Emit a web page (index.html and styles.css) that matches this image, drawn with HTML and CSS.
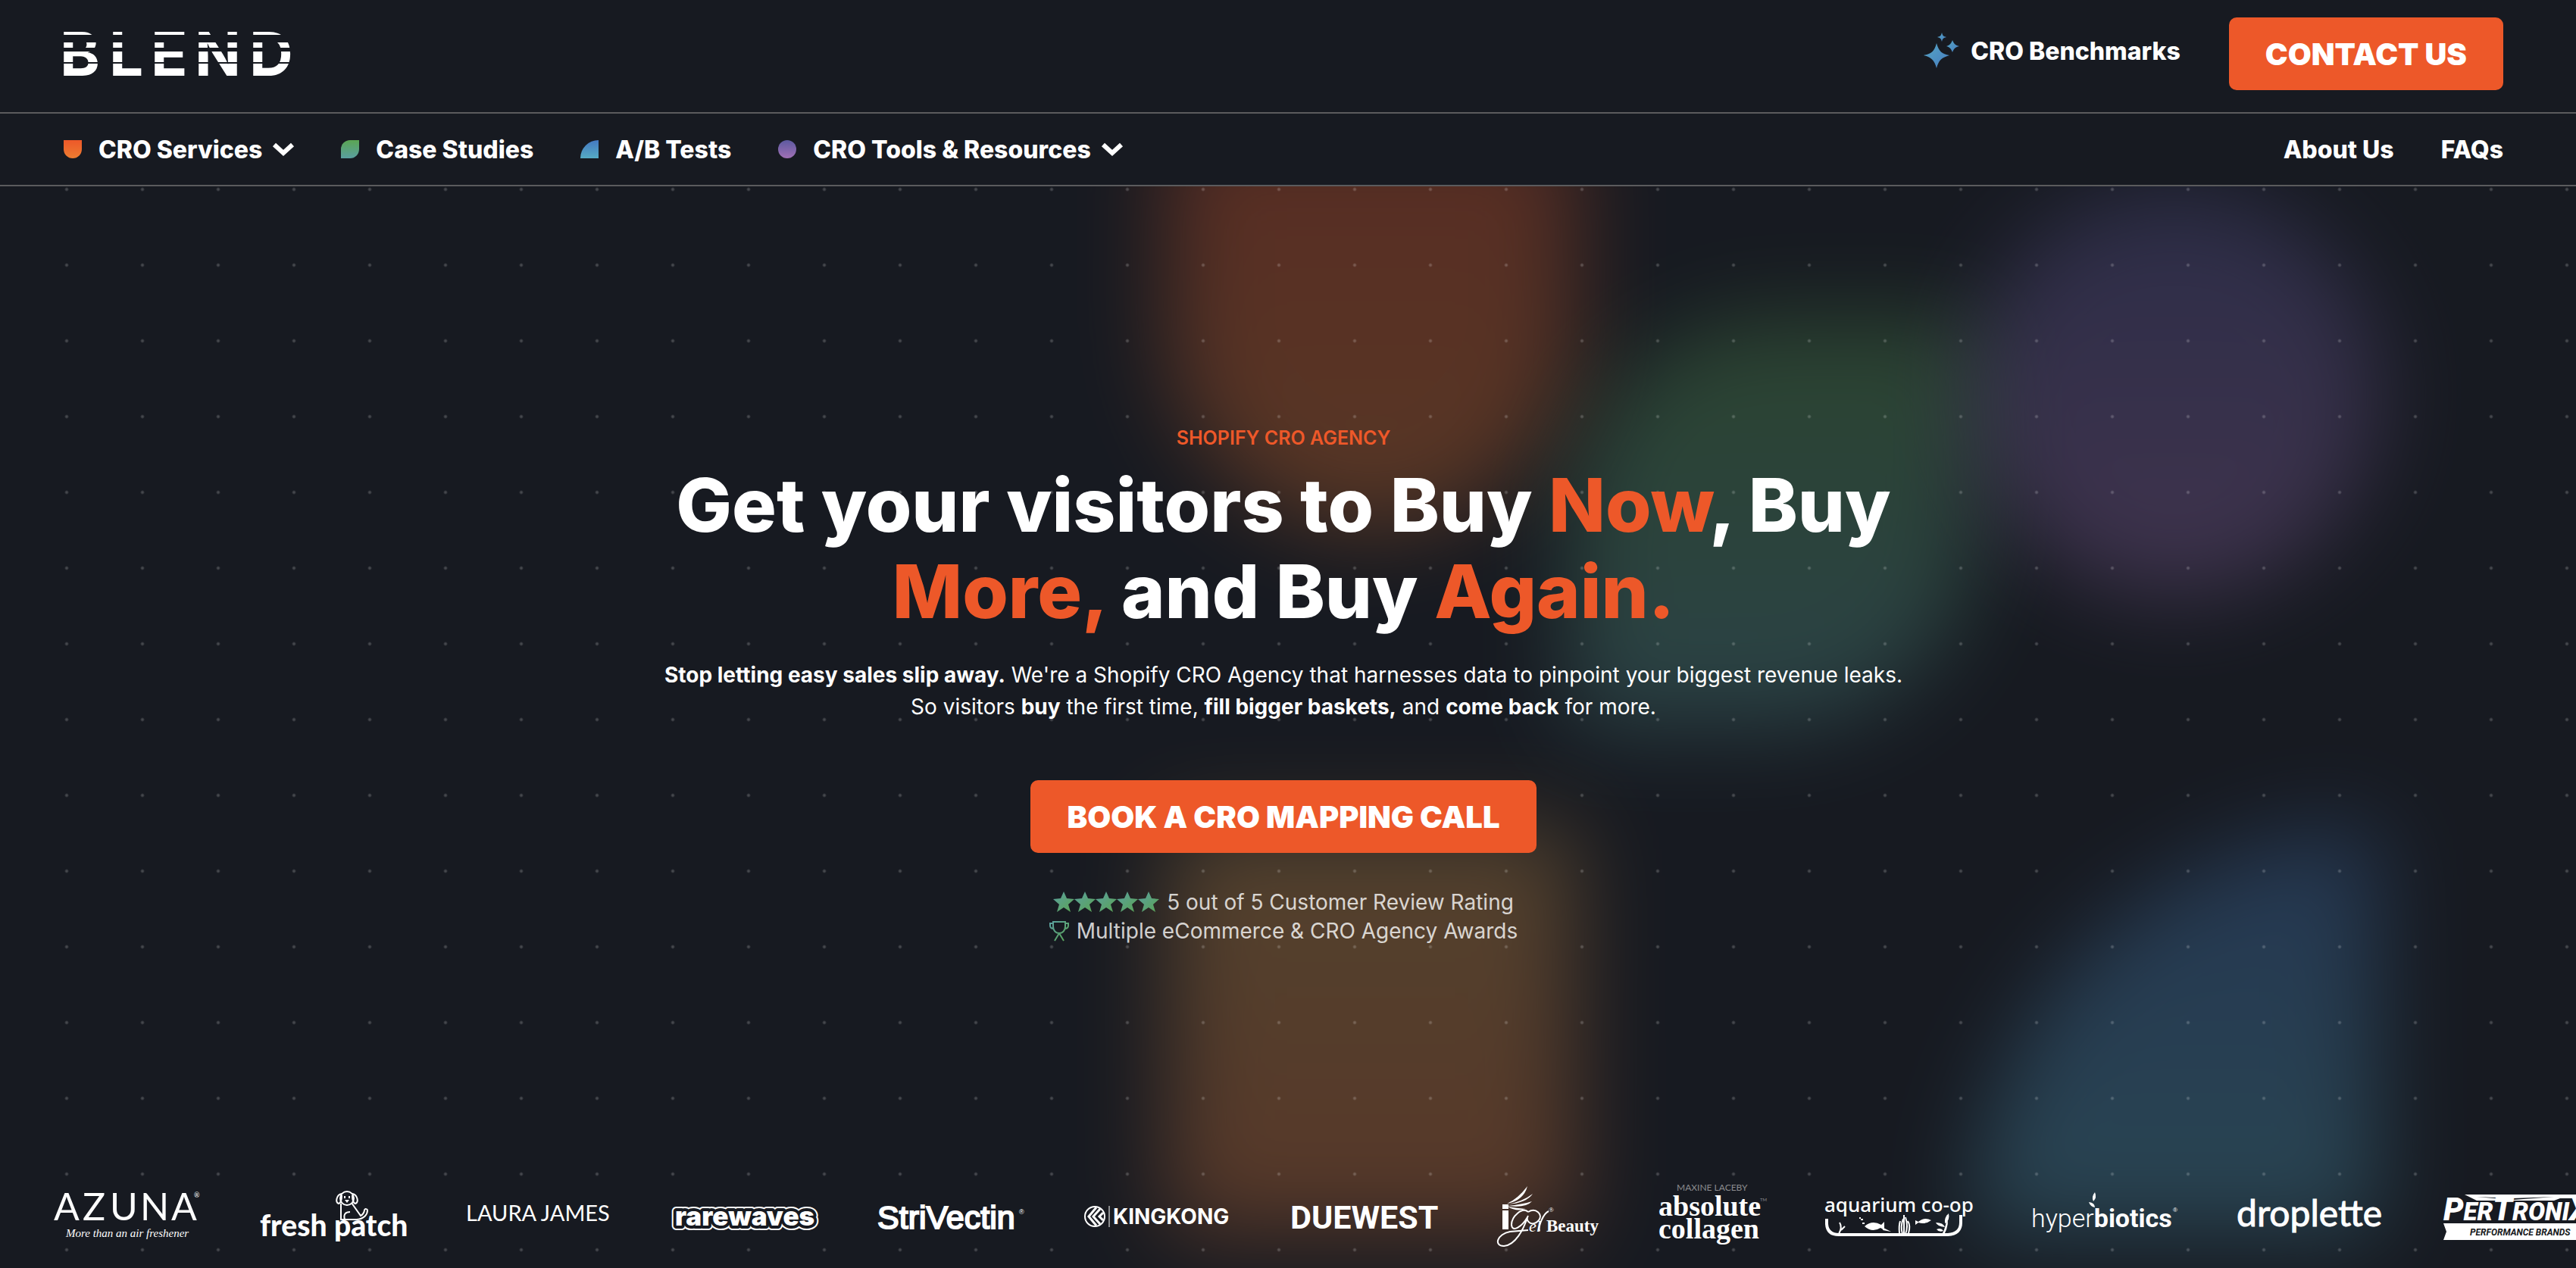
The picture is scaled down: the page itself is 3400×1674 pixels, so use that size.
FILE: index.html
```html
<!DOCTYPE html>
<html lang="en">

<head>
    <meta charset="UTF-8">
    <meta name="viewport" content="width=device-width, initial-scale=1.0">
    <title>Shopify CRO Agency | Blend</title>
    <link rel="stylesheet" href="styles.css">
</head>

<body>
    <header>
        <div class="top-bar">
            <a class="brand" href="#" aria-label="Blend">
                <svg width="304" height="58" viewBox="0 0 304 58">
                    <text class="brand-text" x="-5 60 115 173 245" y="58">BLEND</text>
                    <g class="brand-cuts">
                        <rect x="0" y="4" width="304" height="10" />
                        <rect x="0" y="21" width="304" height="5" />
                        <rect x="0" y="40" width="304" height="2" />
                    </g>
                </svg>
            </a>
            <div class="top-links">
                <a class="benchmarks" href="#">
                    <svg width="48" height="48" viewBox="0 0 48 48">
                        <defs>
                            <linearGradient id="spark" x1="0" y1="0" x2="1" y2="1">
                                <stop offset="0" stop-color="#56a6c4" />
                                <stop offset="1" stop-color="#467cc0" />
                            </linearGradient>
                        </defs>
                        <g fill="url(#spark)">
                            <path d="M17 14C20 25 24 28 34 30C24 33 20 36 17 47C14 36 10 33 0 30C10 28 14 25 17 14Z" />
                            <path d="M38 10C40 15 42 17 47 18C42 19 40 21 38 26C36 21 34 19 30 18C34 17 36 15 38 10Z" />
                            <path d="M24 0C25 4 26 5 30 6C26 7 25 8 24 12C23 8 22 7 18 6C22 5 23 4 24 0Z" />
                        </g>
                    </svg>
                    CRO Benchmarks
                </a>
                <a class="btn" href="#">CONTACT US</a>
            </div>
        </div>
        <nav class="main-nav">
            <ul>
                <li><a href="#"><span class="shape shield"></span>CRO Services
                    <svg class="chevron" width="28" height="18" viewBox="0 0 28 18"><path d="M2 3L14 14L26 3" /></svg></a></li>
                <li><a href="#"><span class="shape leaf"></span>Case Studies</a></li>
                <li><a href="#"><span class="shape quarter"></span>A/B Tests</a></li>
                <li><a href="#"><span class="shape circle"></span>CRO Tools &amp; Resources
                    <svg class="chevron" width="28" height="18" viewBox="0 0 28 18"><path d="M2 3L14 14L26 3" /></svg></a></li>
            </ul>
            <ul>
                <li><a href="#">About Us</a></li>
                <li><a href="#">FAQs</a></li>
            </ul>
        </nav>
    </header>

    <main class="hero">
        <div class="glow">
            <span class="blob blob-orange"></span>
            <span class="blob blob-green"></span>
            <span class="blob blob-purple"></span>
            <span class="blob blob-yellow"></span>
            <span class="blob blob-blue"></span>
        </div>

        <div class="hero-content">
            <p class="eyebrow">SHOPIFY CRO AGENCY</p>
            <h1>Get your visitors to Buy <em>Now</em>, Buy<br><em>More,</em> and Buy <em>Again.</em></h1>
            <p class="lead"><strong>Stop letting easy sales slip away.</strong> We're a Shopify CRO Agency that harnesses data to pinpoint your biggest revenue leaks.<br>
                So visitors <strong>buy</strong> the first time, <strong>fill bigger baskets,</strong> and <strong>come back</strong> for more.</p>
            <a class="btn" href="#">BOOK A CRO MAPPING CALL</a>
            <div class="proof">
                <p>
                    <svg width="140" height="28" viewBox="0 0 140 28">
                        <defs>
                            <linearGradient id="mint" x1="0" y1="0" x2="1" y2="1">
                                <stop offset="0" stop-color="#5a9fa0" />
                                <stop offset="1" stop-color="#5ba553" />
                            </linearGradient>
                            <path id="star" d="M14 0L18 9L28 10L20 17L23 27L14 21L5 27L8 17L0 10L10 9Z" fill="url(#mint)" />
                        </defs>
                        <use href="#star" />
                        <use href="#star" x="28" />
                        <use href="#star" x="56" />
                        <use href="#star" x="84" />
                        <use href="#star" x="112" />
                    </svg>
                    5 out of 5 Customer Review Rating
                </p>
                <p>
                    <svg width="26" height="28" viewBox="0 0 26 28" fill="none" stroke="url(#mint)" stroke-width="2">
                        <path d="M5 2H21V8C21 13 18 17 13 17C8 17 5 13 5 8ZM5 4H1V7C1 10 3 11 6 11M21 4H25V7C25 10 23 11 20 11M13 17L7 27M13 17L19 27" />
                    </svg>
                    Multiple eCommerce &amp; CRO Agency Awards
                </p>
            </div>
        </div>

        <div class="brands">
            <svg class="brand-logo" viewBox="0 0 192 80">
                <text class="lato" x="0 38 74 114 155" y="45" font-size="50">AZUNA</text>
                <text class="lato" x="185" y="15" font-size="9">®</text>
                <text class="serif" x="16" y="67" font-size="15" font-style="italic">More than an air freshener</text>
            </svg>
            <svg class="brand-logo" viewBox="0 0 192 80">
                <text class="lato heavy" x="0" y="66" font-size="39">fresh patch</text>
                <g fill="none" stroke="#fff" stroke-width="2">
                    <circle cx="115" cy="16" r="9" />
                    <path d="M108 10C101 11 99 22 104 23Q108 22 108 12M122 10C129 11 131 22 126 23Q122 22 122 12" />
                    <path d="M107 23V44H128C138 43 142 37 142 32C142 30 138 29 138 32Q137 37 133 39L121 22M112 44C110 37 113 34 119 34" />
                </g>
                <path fill="#fff" d="M111 13h2v3h-2zM117 13h2v3h-2zM112 18h6l-3 4z" />
            </svg>
            <svg class="brand-logo" viewBox="0 0 192 80">
                <text class="lato" x="0" y="46" font-size="29">LAURA JAMES</text>
            </svg>
            <svg class="brand-logo" viewBox="0 0 192 80">
                <!-- two rims round the wordmark: white, then the page colour -->
                <text class="black rim-outer" x="4" y="52" font-size="35">rarewaves</text>
                <text class="black rim-inner" x="4" y="52" font-size="35" aria-hidden="true">rarewaves</text>
            </svg>
            <svg class="brand-logo" viewBox="0 0 192 80">
                <text class="sans" x="-1" y="56" font-size="43" stroke="#fff" stroke-width="2">StriVectin</text>
                <text class="sans" x="186" y="37" font-size="9">®</text>
            </svg>
            <svg class="brand-logo" viewBox="0 0 192 80">
                <circle cx="14" cy="40" r="13" fill="none" stroke="#fff" stroke-width="2" />
                <path fill="none" stroke="#fff" stroke-width="3" d="M16 28L6 40L16 52M21 30L12 40L21 50M25 35L20 40L25 45" />
                <path stroke="#fff" d="M33 26V54" />
                <text class="bold" x="38" y="50" font-size="28">KINGKONG</text>
            </svg>
            <svg class="brand-logo" viewBox="0 0 192 80">
                <text class="roboto bold" x="0" y="56" font-size="43">DUEWEST</text>
            </svg>
            <svg class="brand-logo igel" viewBox="0 0 134 80">
                <path fill="#fff" d="M8 24h8v6h-8zM8 32h8v25h-8zM14 23Q36 19 41 0Q28 17 14 23ZM15 24Q40 22 48 10Q35 20 15 24ZM15 26Q39 29 47 20Q34 24 15 26ZM15 27Q26 34 39 30Q26 29 15 27Z" />
                <path fill="none" stroke="#fff" stroke-width="2" d="M42 34C34 27 20 40 20 51C21 62 34 53 41 41C36 57 25 78 10 79C-4 79 1 63 18 60L42 58M42 34C52 28 62 37 56 45C48 54 37 47 42 39M69 33C62 36 55 53 57 59" />
                <text class="serif" x="43" y="60" font-size="22" font-style="italic">el</text>
                <text class="serif bold" x="66" y="60" font-size="23">Beauty</text>
                <text class="serif" x="69" y="34" font-size="9">®</text>
            </svg>
            <svg class="brand-logo absolute-collagen" viewBox="0 0 140 80">
                <text class="lato faint" x="24" y="6" font-size="12">MAXINE LACEBY</text>
                <text class="serif bold" x="0" y="39" font-size="38">absolute</text>
                <text class="serif bold" x="0" y="69" font-size="38">collagen</text>
                <text class="lato faint" x="134" y="20" font-size="6">TM</text>
            </svg>
            <svg class="brand-logo" viewBox="0 0 192 80">
                <text class="noto medium" x="-1" y="34" font-size="26">aquarium co-op</text>
                <path fill="none" stroke="#fff" stroke-width="4" d="M2 43V50Q3 64 18 64H162Q179 63 179 48V38" />
                <path fill="#fff" d="M52 53Q62 44 74 51L78 47V58L73 55Q62 62 52 53ZM77 55L87 60L76 58ZM119 45L123 47Q131 40 140 45Q132 51 123 48L119 51ZM47 43h3v2h-3zM45 41h2v2h-2zM49 48h3v2h-3z" />
                <path fill="none" stroke="#fff" stroke-width="2" d="M18 63Q23 54 19 48M21 58L26 53M102 63Q99 53 103 43M106 63Q110 53 106 41M104 62V38M98 62Q97 52 99 46M110 62Q113 52 109 46" />
                <path fill="#fff" d="M154 64Q161 51 160 38Q165 49 157 64ZM158 54Q148 53 146 48Q156 48 158 54ZM158 49Q157 41 163 36Q165 45 158 49ZM156 59Q150 61 147 57Q153 54 156 59Z" />
            </svg>
            <svg class="brand-logo" viewBox="0 0 192 80">
                <text class="roboto" x="0" y="54" font-size="34"><tspan class="light">hyper</tspan><tspan class="bold">biotics</tspan></text>
                <path fill="#fff" d="M84 28Q78 27 76 21Q84 22 84 28ZM82 20Q79 14 84 8Q87 15 82 20Z" />
                <text class="sans" x="187" y="34" font-size="8">®</text>
            </svg>
            <svg class="brand-logo" viewBox="0 0 192 80">
                <text class="lato" x="-1" y="53" font-size="48" stroke="#fff">droplette</text>
            </svg>
            <svg class="brand-logo" viewBox="0 0 192 80">
                <path fill="#fff" d="M28 11H192V16H154L146 19H44ZM0 49H192V71H0L4 60Z" />
                <path fill="#171a21" d="M44 14L92 16L146 14L92 18Z" />
                <text class="roboto black" x="0" y="45" font-size="42" font-style="italic"><tspan>P</tspan><tspan font-size="33">ER</tspan><tspan>T</tspan><tspan font-size="33">RONI</tspan><tspan>X</tspan></text>
                <text class="roboto bold dark" x="35" y="65" font-size="12" font-style="italic">PERFORMANCE BRANDS</text>
            </svg>
        </div>
    </main>
</body>

</html>
```

FILE: styles.css
```css
body {
    margin: 0;
    min-height: 100vh;
    display: flex;
    flex-direction: column;
    overflow-x: hidden;
    background-color: #171a21;
    color: #fff;
    font-family: Inter, sans-serif;
}

a {
    color: inherit;
    text-decoration: none;
}

p,
h1,
ul {
    margin: 0;
    padding: 0;
}

svg {
    flex-shrink: 0;
    overflow: visible;
}

/* header */
.top-bar,
.main-nav {
    display: flex;
    justify-content: space-between;
    align-items: center;
    padding: 0 96px 0 84px;
    border-bottom: 2px solid #5b5b5d;
    font-size: 32px;
    font-weight: 800;
}

.top-bar {
    min-height: 142px;
    padding-bottom: 6px;
}

.main-nav {
    min-height: 94px;
}

.brand svg {
    display: block;
}

.brand-text {
    font-size: 80px;
    font-weight: 700;
    fill: #fff;
}

.brand-cuts {
    fill: #171a21;
}

.top-links,
.main-nav ul {
    display: flex;
    gap: 64px;
    list-style: none;
}

.benchmarks,
.main-nav a {
    display: flex;
    align-items: center;
}

.benchmarks {
    gap: 14px;
    padding-bottom: 8px;
}

.main-nav ul {
    gap: 62px;
}

.main-nav a {
    gap: 14px;
}

.chevron {
    fill: none;
    stroke: #fff;
    stroke-width: 6;
}

.shape {
    width: 24px;
    height: 24px;
    margin-right: 8px;
}

.shield,
.blob-orange {
    background: linear-gradient(#ed5829, #ed7d31);
    border-radius: 0 0 50% 50%;
}

.leaf,
.blob-green {
    background: linear-gradient(#5ba553, #5a9fa0);
    border-radius: 50% 0 50% 0;
}

.quarter,
.blob-blue {
    background: linear-gradient(#4478c0, #56abc4);
    border-radius: 100% 0 0 0;
}

.circle,
.blob-purple {
    background: linear-gradient(#5d5aa0, #a070b5);
    border-radius: 50%;
}

.btn {
    display: flex;
    align-items: center;
    height: 96px;
    padding: 0 48px;
    border-radius: 10px;
    background-color: #ed5829;
    font-size: 40px;
    font-weight: 900;
}

/* hero */
.hero {
    position: relative;
    flex: 1;
    display: flex;
    flex-direction: column;
    overflow: hidden;
}

/* dot grid */
.hero::before {
    content: "";
    position: absolute;
    inset: 0;
    z-index: 1;
    background: radial-gradient(circle at 50% 50%, rgba(255, 255, 255, 0.2) 1px, transparent 3px) 38px -46px / 100px 100px;
}

.glow {
    position: absolute;
    inset: 0;
}

.blob {
    position: absolute;
    width: 540px;
    height: 540px;
    opacity: 0.3;
    filter: blur(60px);
}

.blob-orange {
    right: 1320px;
    top: -86px;
}

.blob-green {
    right: 790px;
    top: 174px;
}

.blob-purple {
    right: 260px;
    top: 0;
}

.blob-yellow {
    right: 1320px;
    bottom: 44px;
    background: linear-gradient(#dc9f4c, #ec7c3c);
}

.blob-blue {
    right: 260px;
    bottom: 44px;
}

.hero-content {
    position: relative;
    z-index: 2;
    flex: 1;
    display: flex;
    flex-direction: column;
    align-items: center;
    justify-content: center;
    padding: 0 12px 6px 0;
    text-align: center;
}

.eyebrow {
    margin-bottom: 12px;
    color: #ed5829;
    font-size: 25px;
    font-weight: 600;
    line-height: 40px;
}

h1 {
    margin-bottom: 32px;
    font-size: 98px;
    font-weight: 800;
    line-height: 114px;
}

h1 em {
    color: #ed5829;
    font-style: normal;
}

.lead {
    margin-bottom: 76px;
    font-size: 28px;
    line-height: 42px;
}

.proof {
    margin-top: 46px;
    color: rgba(255, 255, 255, 0.8);
    font-size: 28px;
    line-height: 38px;
}

.proof p {
    display: flex;
    align-items: center;
    justify-content: center;
    gap: 10px;
}

/* customer logos */
.brands {
    position: relative;
    z-index: 2;
    display: flex;
    gap: 80px;
    padding: 0 0 28px 71px;
    fill: #fff;
}

.brand-logo {
    width: 192px;
    height: 80px;
}

.igel {
    width: 134px;
}

.absolute-collagen {
    width: 140px;
}

.lato {
    font-family: Lato, sans-serif;
}

.sans {
    font-family: "Liberation Sans", sans-serif;
}

.roboto {
    font-family: Roboto, sans-serif;
}

.serif {
    font-family: "Liberation Serif", serif;
}

.noto {
    font-family: "Noto Sans", sans-serif;
}

.light {
    font-weight: 300;
}

.medium {
    font-weight: 500;
}

.bold {
    font-weight: 700;
}

.heavy,
.black {
    font-weight: 900;
}

.faint {
    fill: #8a8b8e;
}

.dark {
    fill: #171a21;
}

.rim-outer,
.rim-inner {
    paint-order: stroke;
    stroke-linejoin: round;
}

.rim-outer {
    stroke: #fff;
    stroke-width: 12;
}

.rim-inner {
    stroke: #171a21;
    stroke-width: 8;
}
```
